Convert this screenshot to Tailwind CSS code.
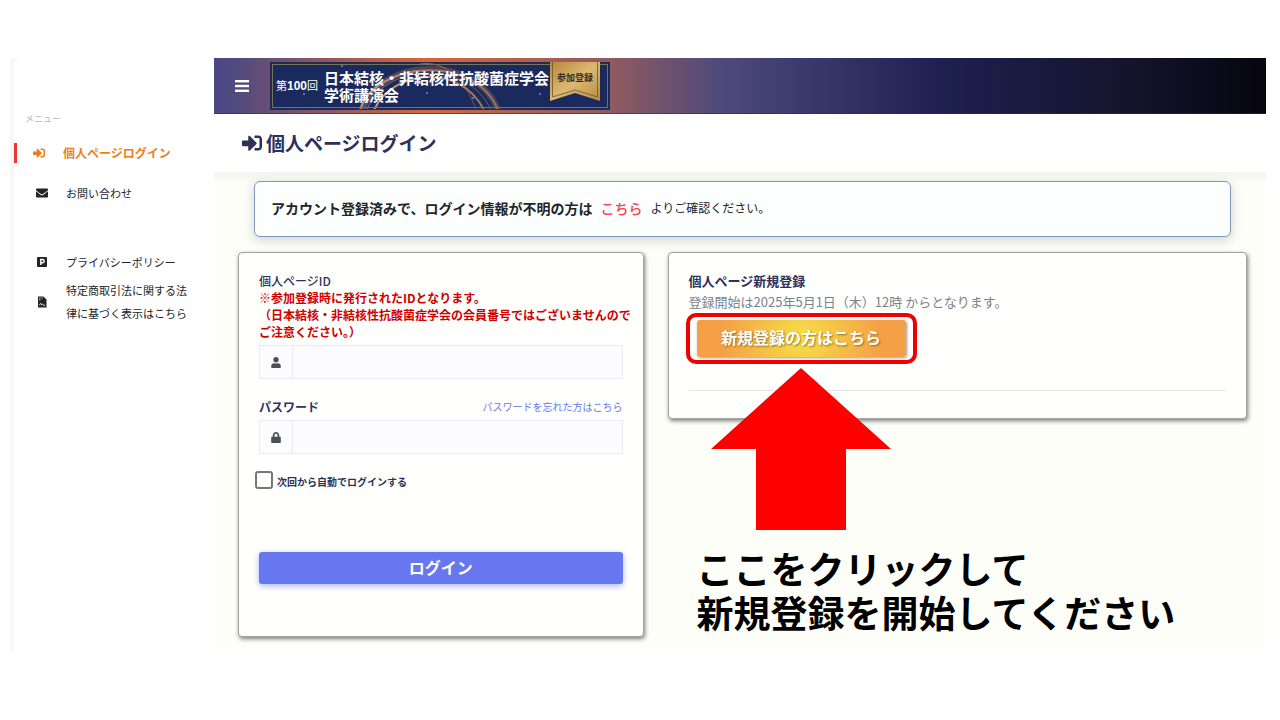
<!DOCTYPE html>
<html lang="ja">
<head>
    <meta charset="UTF-8">
    <meta name="viewport" content="width=device-width, initial-scale=1.0">
    <title>個人ページログイン</title>
    <script src="https://cdn.jsdelivr.net/npm/@tailwindcss/browser@4"></script>
</head>
<body class="bg-white text-[#212529] font-['Noto_Sans_CJK_JP',sans-serif] pt-[58px] pb-[70px] pl-[10px] pr-[14px]">
    <div class="flex">

        <!-- Sidebar -->
        <aside class="w-[204px] shrink-0 bg-[#f7f7f7] pl-1">
            <nav class="h-full bg-white rounded-tl-lg pt-[52px] text-[11px]">
                <p class="pl-[11px] text-[9px] leading-[18px] text-[#b4b7bd]">メニュー</p>
                <ul>
                    <li class="mt-[15px]">
                        <a href="#" class="flex items-center gap-[18px] border-l-3 border-[#f03535] pl-4 text-xs leading-5 font-bold text-[#ee7d1a]">
                            <svg class="w-3 h-3 shrink-0" viewBox="0 0 512 512" fill="currentColor"><path d="M416 448h-84c-6.600 0-12-5.400-12-12v-40c0-6.600 5.400-12 12-12h84c17.700 0 32-14.300 32-32V160c0-17.700-14.300-32-32-32h-84c-6.600 0-12-5.400-12-12V76c0-6.600 5.400-12 12-12h84c53 0 96 43 96 96v192c0 53-43 96-96 96zm-47-201L201 79c-15-15-41-4.500-41 17v96H24c-13.300 0-24 10.700-24 24v96c0 13.300 10.700 24 24 24h136v96c0 21.500 26 32 41 17l168-168c9.300-9.400 9.300-24.600 0-34z"/></svg>
                            個人ページログイン
                        </a>
                    </li>
                    <li class="mt-5">
                        <a href="#" class="flex items-center gap-[18px] pl-[22px] leading-5">
                            <svg class="w-3 h-3 shrink-0" viewBox="0 0 512 512" fill="currentColor"><path d="M502.300 190.800c3.900-3.100 9.700-.2 9.700 4.700V400c0 26.500-21.500 48-48 48H48c-26.500 0-48-21.500-48-48V195.600c0-5 5.700-7.800 9.700-4.700 22.400 17.400 52.100 39.500 154.100 113.600 21.100 15.400 56.700 47.800 92.200 47.600 35.700.3 72-32.800 92.300-47.600 102-74.100 131.600-96.300 154-113.700zM256 320c23.200.4 56.600-29.200 73.400-41.400 132.700-96.300 142.800-104.700 173.400-128.700 5.800-4.500 9.200-11.500 9.200-18.900v-19c0-26.500-21.500-48-48-48H48c-26.500 0-48 21.500-48 48v19c0 7.400 3.400 14.300 9.200 18.900 30.600 23.900 40.700 32.400 173.400 128.700 16.800 12.200 50.200 41.800 73.400 41.400z"/></svg>
                            お問い合わせ
                        </a>
                    </li>
                    <li class="mt-[49px]">
                        <a href="#" class="flex items-center gap-[18px] pl-[22px] leading-5">
                            <svg class="w-3 h-3 shrink-0" viewBox="0 0 12 12"><rect x="1" y="1" width="10" height="10" rx="1" fill="#212529"/><path d="M4.800 9V3.500h1.700a1.600 1.600 0 0 1 0 3.300H4.800" fill="none" stroke="#fff" stroke-width="1.400"/></svg>
                            プライバシーポリシー
                        </a>
                    </li>
                    <li class="mt-[7px]">
                        <a href="#" class="flex items-center gap-[18px] pl-[22px] pr-5 leading-[23px]">
                            <svg class="w-3 h-3 shrink-0" viewBox="0 0 12 12"><path d="M2 .5h5.500L10.500 3.500v8H2z" fill="#212529"/><path d="M3.200 2h1.300M5.500 2h1.300M3.200 3.700h1.300M3.300 9.300l1.400-2 .9 1.500 1-.8.8 1.300h1.600" fill="none" stroke="#fff" stroke-width=".8"/></svg>
                            <span>特定商取引法に関する法<br>律に基づく表示はこちら</span>
                        </a>
                    </li>
                </ul>
            </nav>
        </aside>

        <div class="flex-1 min-w-0 bg-[#fdfef8]">
            <!-- Top bar -->
            <header class="h-14 flex items-center pl-[21px] border-b border-[#2c2a4e]/60 bg-[linear-gradient(90deg,#4b4783_0%,#504a80_2%,#d9663a_20%,#8f5a60_38%,#4e4a7c_48%,#1e2050_69%,#14142c_87%,#06050f_100%)]">
                <button type="button" aria-label="メニューを開く" class="w-[14px]">
                    <svg class="w-full" viewBox="0 0 14 12" fill="#fff"><rect width="14" height="2.400"/><rect y="4.800" width="14" height="2.400"/><rect y="9.600" width="14" height="2.400"/></svg>
                </button>
                <a href="#" class="relative ml-[21px] w-[340px] h-12 flex items-center bg-[#1b2a5c] text-white overflow-hidden">
                    <svg class="absolute inset-0" width="340" height="48" viewBox="0 0 340 48" fill="none">
                        <defs>
                            <linearGradient id="ring" x1="0" x2="1"><stop offset="0" stop-color="#f0b98a"/><stop offset=".5" stop-color="#d88a5a"/><stop offset="1" stop-color="#c08a5a"/></linearGradient>
                        </defs>
                        <g stroke="url(#ring)">
                            <path d="M92 48C110 -4 205 -10 228 48" stroke-width="6" opacity=".25"/>
                            <path d="M90 48C105 0 205 -10 228 48" stroke-width="2" opacity=".7"/>
                            <path d="M97 48C112 2 198 -4 221 48" stroke-width="1" opacity=".5"/>
                            <path d="M104 48C122 8 190 0 214 48" stroke-width="2" opacity=".8"/>
                            <path d="M150 2C175 -2 196 18 206 48" opacity=".5"/>
                        </g>
                        <g fill="#5f8fd0"><circle cx="34" cy="32" r="1"/><circle cx="72" cy="4" r="1"/><circle cx="157" cy="31" r="1"/><circle cx="203" cy="36" r="1"/><circle cx="270" cy="32" r="1"/></g>
                        <rect x="2.500" y="2.500" width="335" height="43" stroke="#75745f"/>
                        <rect x=".5" y=".5" width="339" height="47" stroke="#222c50"/>
                    </svg>
                    <span class="relative pl-[6px] w-[54px] whitespace-nowrap text-[11px]">第<b class="font-['Liberation_Sans',sans-serif] text-xs">100</b>回</span>
                    <span class="relative whitespace-nowrap text-[15px] leading-[17px] font-bold">日本結核・非結核性抗酸菌症学会<br>学術講演会</span>
                    <svg class="absolute right-[10px] top-0" width="50" height="39" viewBox="0 0 50 39">
                        <defs><linearGradient id="gold" x1="0" x2="1" y2="1"><stop offset="0" stop-color="#b8873b"/><stop offset=".5" stop-color="#dcb873"/><stop offset="1" stop-color="#b98a3c"/></linearGradient></defs>
                        <path d="M0 0h50v39L25 31 0 39z" fill="url(#gold)"/>
                        <path d="M2.500 0v35L25 28l22.500 7V0" fill="none" stroke="#6b5530" stroke-width=".8"/>
                        <text x="25" y="19" text-anchor="middle" font-size="9" font-weight="700" fill="#3a2c1a">参加登録</text>
                    </svg>
                </a>
            </header>

            <div class="h-[58px] flex items-center gap-1 bg-white pl-7 text-[#2d315a]">
                <svg class="w-5 h-5" viewBox="0 0 512 512" fill="currentColor"><path d="M416 448h-84c-6.600 0-12-5.400-12-12v-40c0-6.600 5.400-12 12-12h84c17.700 0 32-14.300 32-32V160c0-17.700-14.300-32-32-32h-84c-6.600 0-12-5.400-12-12V76c0-6.600 5.400-12 12-12h84c53 0 96 43 96 96v192c0 53-43 96-96 96zm-47-201L201 79c-15-15-41-4.500-41 17v96H24c-13.300 0-24 10.700-24 24v96c0 13.300 10.700 24 24 24h136v96c0 21.500 26 32 41 17l168-168c9.300-9.400 9.300-24.600 0-34z"/></svg>
                <h1 class="text-[19px] font-bold">個人ページログイン</h1>
            </div>

            <main class="pl-6 pr-[19px] pt-[9px] pb-[13px] bg-[linear-gradient(#f3f4ee,#fdfef8_12px)]">
                <div class="mx-4 h-14 flex items-center gap-2 px-4 pb-[2px] border border-[#7f99bd] rounded-md bg-[#fcfffe] shadow-[0_3px_12px_rgba(0,0,0,0.18)]">
                    <strong class="text-[14px] leading-5">アカウント登録済みで、ログイン情報が不明の方は</strong>
                    <a href="#" class="text-[14px] leading-5 font-medium text-[#fa4251]">こちら</a>
                    <span class="text-xs">よりご確認ください。</span>
                </div>

                <div class="mt-[15px] grid grid-cols-[7fr_10fr] items-start gap-6">
                    <!-- Login -->
                    <form class="min-w-0 border border-[#a3a3a3] rounded bg-[#fffffd] shadow-[1px_2px_4px_rgba(0,0,0,0.5)] px-5 pt-5 pb-[52px]">
                        <label for="loginId" class="block text-xs leading-4 font-medium text-[#2d315a]">個人ページID</label>
                        <p class="whitespace-nowrap text-xs leading-[17px] font-bold text-[#d00000]">※参加登録時に発行されたIDとなります。<br>（日本結核・非結核性抗酸菌症学会の会員番号ではございませんので<br>ご注意ください。）</p>
                        <div class="mt-[5px] h-[34px] flex border border-[#e9eaf6] bg-[#fcfcff]">
                            <span class="w-[33px] flex items-center justify-center border-r border-[#e9eaf6]">
                                <svg class="w-[10px] h-[11px]" viewBox="0 0 448 512" fill="#495057"><path d="M224 256c70.700 0 128-57.300 128-128S294.700 0 224 0 96 57.300 96 128s57.300 128 128 128zm89.600 32h-16.700c-22.200 10.200-46.900 16-72.900 16s-50.600-5.800-72.900-16h-16.700C60.200 288 0 348.200 0 422.400V464c0 26.500 21.500 48 48 48h352c26.500 0 48-21.500 48-48v-41.600c0-74.200-60.200-134.400-134.400-134.400z"/></svg>
                            </span>
                            <input type="text" id="loginId" class="flex-1 min-w-0 px-2 text-xs outline-none">
                        </div>

                        <div class="mt-[19px] flex items-center justify-between leading-[18px]">
                            <label for="password" class="text-xs leading-[18px] font-bold text-[#2d315a]">パスワード</label>
                            <a href="#" class="text-[10px] text-[#6777ef]">パスワードを忘れた方はこちら</a>
                        </div>
                        <div class="mt-1 h-[34px] flex border border-[#e9eaf6] bg-[#fcfcff]">
                            <span class="w-[33px] flex items-center justify-center border-r border-[#e9eaf6]">
                                <svg class="w-[10px] h-[11px]" viewBox="0 0 448 512" fill="#495057"><path d="M400 224h-24v-72C376 68.200 307.800 0 224 0S72 68.200 72 152v72H48c-26.500 0-48 21.500-48 48v192c0 26.500 21.500 48 48 48h352c26.500 0 48-21.500 48-48V272c0-26.500-21.500-48-48-48zm-104 0H152v-72c0-39.700 32.300-72 72-72s72 32.300 72 72v72z"/></svg>
                            </span>
                            <input type="password" id="password" class="flex-1 min-w-0 px-2 text-xs outline-none">
                        </div>

                        <div class="mt-[17px] -ml-1 flex items-end gap-1">
                            <input type="checkbox" id="remember" class="appearance-none w-[18px] h-[18px] border-2 border-[#777] rounded-[3px] bg-white">
                            <label for="remember" class="text-[10px] leading-[15px] font-bold text-[#2d315a]">次回から自動でログインする</label>
                        </div>

                        <button type="submit" class="mt-[63px] w-full h-8 pb-[3px] rounded-[3px] bg-[#6777ef] text-white font-bold text-base leading-5 shadow-[0_2px_6px_#acb5f6]">ログイン</button>
                    </form>

                    <!-- New registration -->
                    <div class="relative min-w-0">
                        <section class="border border-[#a3a3a3] rounded bg-[#fffffd] shadow-[1px_2px_4px_rgba(0,0,0,0.5)] px-5 pt-[17px] pb-[27px]">
                            <h2 class="text-[13px] leading-[21px] font-bold text-[#2d315a]">個人ページ新規登録</h2>
                            <p class="text-[13px] leading-[22px] text-[#7b838c]">登録開始は2025年5月1日（木）12時 からとなります。</p>
                            <div class="relative w-[209px] mt-[7px] ml-2">
                                <button type="button" class="w-full h-[37px] pb-[3px] rounded-[3px] text-white font-bold text-base bg-[radial-gradient(circle,#f5df47_0%,#f5a046_75%,#f5a046_100%)] shadow-[1px_1px_3px_rgba(0,0,0,0.4)] text-shadow-[1px_1px_2px_rgba(90,60,0,0.6)]">新規登録の方はこちら</button>
                                <div class="absolute -inset-x-[11px] -inset-y-[7px] border-4 border-[#f00000] rounded-[10px]"></div>
                            </div>
                            <hr class="mt-[33px] border-[#e6e6e8]">
                        </section>
                        <svg class="absolute left-[43px] top-[116px]" width="180" height="162" viewBox="0 0 180 162" fill="#f00"><path d="M90 0l90 81h-45v81H45V81H0z"/></svg>
                        <p class="mt-[127px] pl-[29px] whitespace-nowrap text-[37px] leading-[44px] font-bold text-black">ここをクリックして<br>新規登録を開始してください</p>
                    </div>
                </div>
            </main>
        </div>
    </div>
</body>
</html>
